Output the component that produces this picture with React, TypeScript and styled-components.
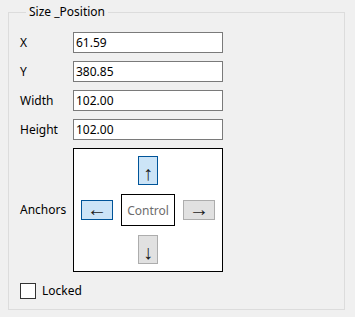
import React from 'react'
import styled, { createGlobalStyle } from 'styled-components';

const GlobalStyle = createGlobalStyle`
	html, body {
		margin: 0;
		padding: 0;
		background: #f0f0f0;
	}
	body {
		font-family: "Segoe UI", "Noto Sans", "Liberation Sans", sans-serif;
		font-size: 12px;
		color: #000;
	}
`;

const Page = styled.div`
	width: 355px;
	height: 317px;
	padding: 4px 0 0 8px;
	box-sizing: border-box;
`;

const GroupBox = styled.fieldset`
	width: 337px;
	height: 306px;
	box-sizing: border-box;
	margin: 0;
	padding: 12px 0 0 11px;
	border: 1px solid #dcdcdc;
	display: flex;
	flex-direction: column;
	gap: 8px;
`;

const Legend = styled.legend`
	margin-left: 6px;
	padding: 0 3px;
	line-height: 16px;
	font-size: 12px;
`;

const FieldRow = styled.div`
	display: flex;
	flex-direction: row;
	align-items: center;
`;

const Label = styled.label`
	width: 53px;
	line-height: 16px;
`;

const TextBox = styled.input`
	width: 150px;
	height: 21px;
	box-sizing: border-box;
	border: 1px solid #7a7a7a;
	background: #fff;
	padding: 0 2px;
	margin: 0;
	font-family: inherit;
	font-size: 12px;
	color: #000;
	outline: none;
`;

const AnchorBox = styled.div`
	width: 150px;
	height: 124px;
	box-sizing: border-box;
	border: 1px solid #000;
	background: #fff;
	display: grid;
	grid-template-columns: 32px 54px 32px;
	grid-template-rows: 29px 32px 29px;
	column-gap: 8px;
	row-gap: 9px;
	justify-content: center;
	align-content: center;
	justify-items: center;
	align-items: center;
`;

const ArrowButton = styled.div<{ $on: boolean; $vertical?: boolean }>`
	width: ${p => (p.$vertical ? '20px' : '32px')};
	height: ${p => (p.$vertical ? '29px' : '20px')};
	box-sizing: border-box;
	border: 1px solid ${p => (p.$on ? '#005499' : '#adadad')};
	background: ${p => (p.$on ? '#cce4f7' : '#e1e1e1')};
	display: flex;
	align-items: center;
	justify-content: center;
	padding: ${p => (p.$vertical ? '4px 0 0' : '0 0 3px')};
	font-family: "Liberation Sans", sans-serif;
	font-size: 20px;
	line-height: 1;
	color: #1a1a1a;
`;

const ControlBox = styled.div`
	width: 54px;
	height: 32px;
	box-sizing: border-box;
	border: 1px solid #000;
	display: flex;
	align-items: center;
	justify-content: center;
	color: #6d6d6d;
`;

const CheckRow = styled.div`
	display: flex;
	align-items: center;
	gap: 6px;
	margin-top: 2px;
	padding-left: 0;
`;

const CheckBox = styled.span`
	width: 16px;
	height: 16px;
	box-sizing: border-box;
	border: 1px solid #333;
	background: #fff;
`;

const fields = [
	{ label: 'X', value: '61.59' },
	{ label: 'Y', value: '380.85' },
	{ label: 'Width', value: '102.00' },
	{ label: 'Height', value: '102.00' },
];

export default function App() {
	return (
		<Page>
			<GlobalStyle />
			<GroupBox>
				<Legend>Size _Position</Legend>
				{fields.map(f => (
					<FieldRow key={f.label}>
						<Label>{f.label}</Label>
						<TextBox defaultValue={f.value} />
					</FieldRow>
				))}
				<FieldRow>
					<Label>Anchors</Label>
					<AnchorBox>
						<span />
						<ArrowButton $on $vertical>↑</ArrowButton>
						<span />
						<ArrowButton $on>←</ArrowButton>
						<ControlBox>Control</ControlBox>
						<ArrowButton $on={false}>→</ArrowButton>
						<span />
						<ArrowButton $on={false} $vertical>↓</ArrowButton>
						<span />
					</AnchorBox>
				</FieldRow>
				<CheckRow>
					<CheckBox />
					<span>Locked</span>
				</CheckRow>
			</GroupBox>
		</Page>
	)
}
